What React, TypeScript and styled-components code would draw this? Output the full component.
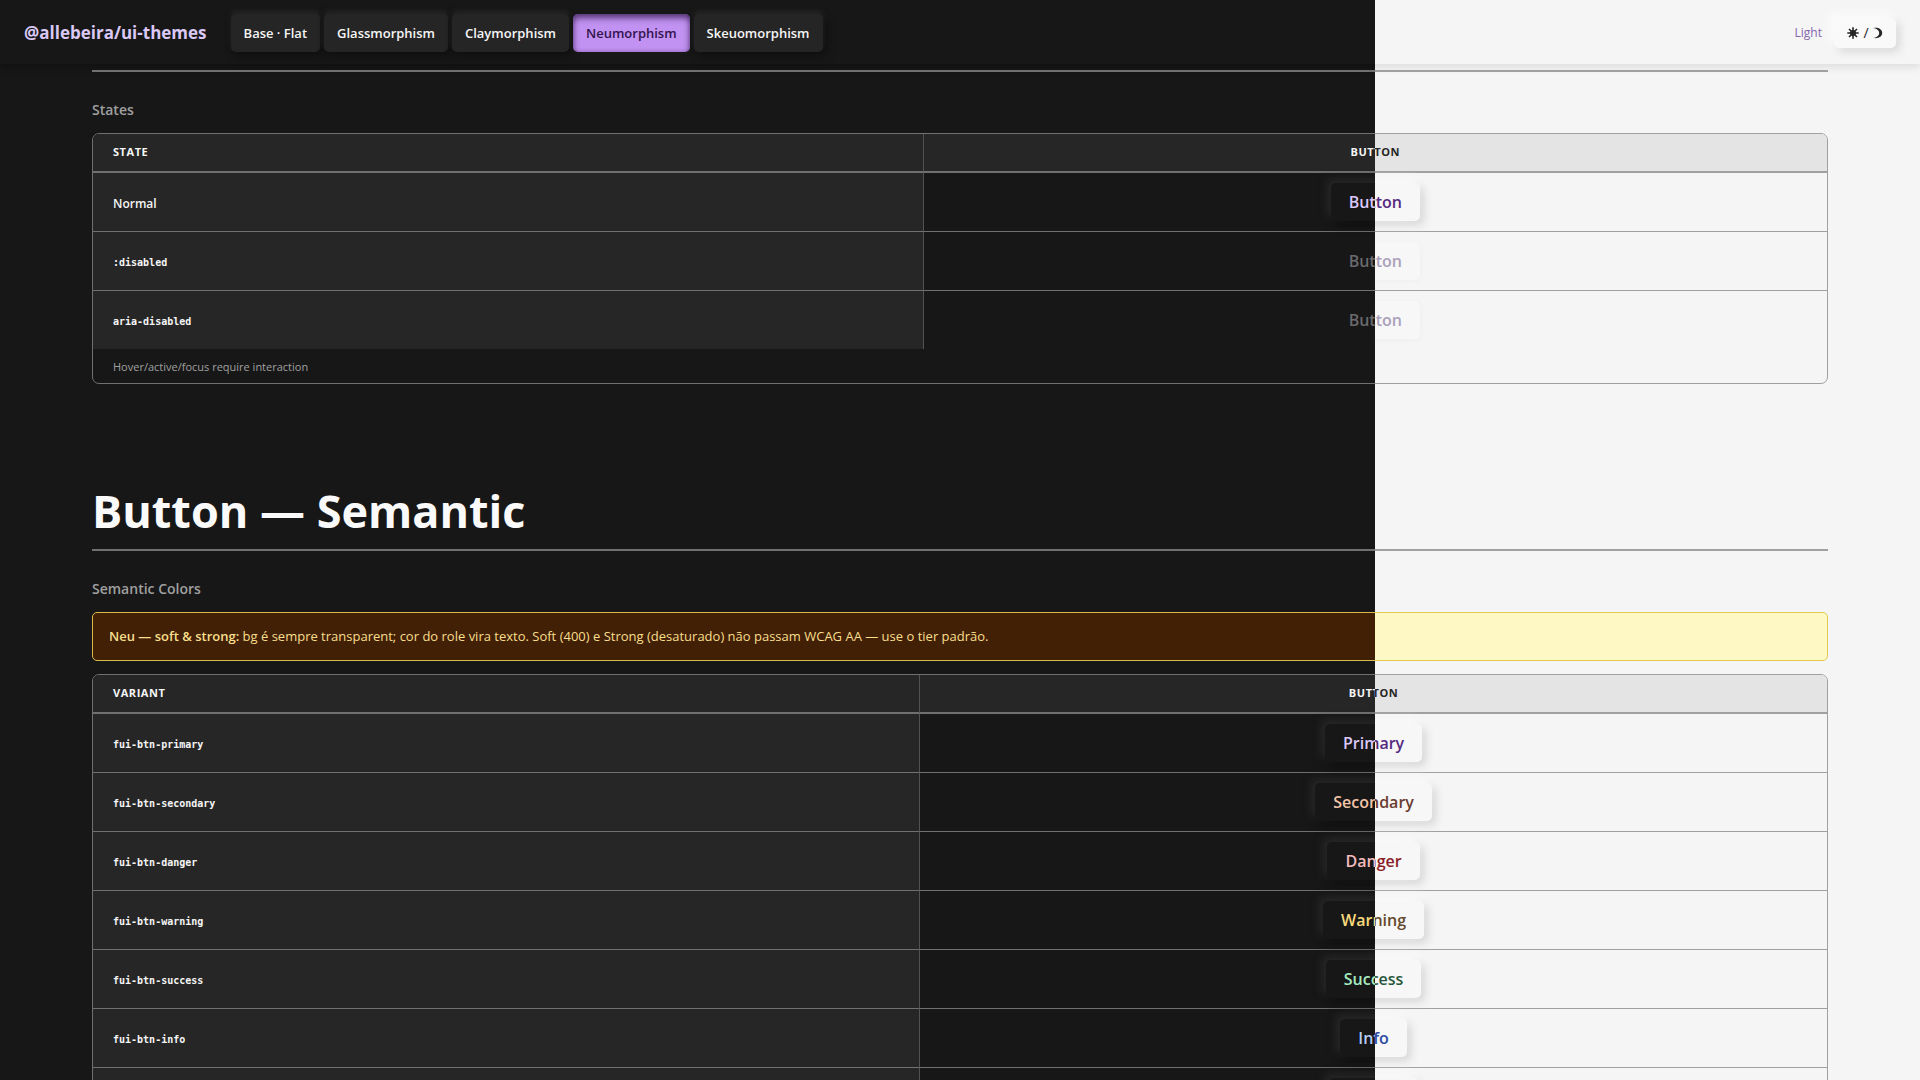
import React from "react";
import styled, { createGlobalStyle, css, ThemeProvider } from "styled-components";

type Tone =
  | "primary"
  | "secondary"
  | "danger"
  | "warning"
  | "success"
  | "info"
  | "accent";

const light = {
  name: "light",
  bg: "#f5f5f5",
  text: "#262626",
  muted: "#6b6b6b",
  brand: "#6b21a8",
  mode: "#8567ad",
  heading: "#171717",
  rule: "#a0a0a0",
  divider: "#c4c4c4",
  headCell: "#e4e4e4",
  rowCell: "#e4e4e4",
  tabBg: "#f9f9f9",
  tabShadow: "-4px -4px 8px #fcfcfc, 4px 4px 8px #d9d9d9",
  raised: "-4px -4px 8px #fafafa, 4px 4px 8px #d6d6d6",
  raisedBg: "#f7f7f7",
  faint: "1px 1px 4px #efefef",
  faintBg: "#f7f7f7",
  disabled: "#aaa0ba",
  headerShadow: "0 3px 8px rgba(0, 0, 0, 0.1)",
  noteBg: "#fef8c4",
  noteText: "#713f12",
  noteBorder: "#e6c94f",
  tones: {
    primary: "#552a80",
    secondary: "#6b3c30",
    danger: "#8a1c28",
    warning: "#66492a",
    success: "#28563a",
    info: "#2c4aa0",
    accent: "#552a80",
  } as Record<Tone, string>,
};

const dark: typeof light = {
  name: "dark",
  bg: "#171717",
  text: "#f5f5f5",
  muted: "#a0a0a0",
  brand: "#dac8f5",
  mode: "#dac8f5",
  heading: "#fafafa",
  rule: "#707070",
  divider: "#525252",
  headCell: "#262626",
  rowCell: "#262626",
  tabBg: "#252525",
  tabShadow: "0 -4px 5px #232323, 3px 4px 8px #101010",
  raised: "-4px -4px 8px #282828, 4px 4px 8px #0f0f0f",
  raisedBg: "#171717",
  faint: "none",
  faintBg: "#171717",
  disabled: "#6a696e",
  headerShadow: "0 3px 8px rgba(0, 0, 0, 0.3)",
  noteBg: "#422006",
  noteText: "#f8df8b",
  noteBorder: "#d8bb4a",
  tones: {
    primary: "#dcc8fa",
    secondary: "#f3c3a8",
    danger: "#f4bcbc",
    warning: "#f8db7c",
    success: "#a6ecc0",
    info: "#b4cdf6",
    accent: "#dcc8fa",
  },
};

type Palette = typeof light;

const GlobalStyle = createGlobalStyle`
  *, *::before, *::after { box-sizing: border-box; }
  html { scrollbar-width: none; }
  body {
    margin: 0;
    font-family: "Open Sans", "Noto Sans", sans-serif;
  }
  button { font-family: inherit; }
`;

const Stage = styled.div`
  position: relative;
`;

/* The dark snapshot is wiped over the light one from the left. */
const Wipe = styled.div`
  position: absolute;
  inset: 0;
  clip-path: inset(0 28.385% 0 0);
`;

const Screen = styled.div<{ theme: Palette }>`
  min-height: 100vh;
  background: ${({ theme }) => theme.bg};
  color: ${({ theme }) => theme.text};
`;

const Header = styled.header<{ theme: Palette }>`
  display: flex;
  align-items: center;
  height: 64px;
  padding: 2px 24px 0;
  gap: 24px;
  box-shadow: ${({ theme }) => theme.headerShadow};
`;

const Brand = styled.span<{ theme: Palette }>`
  font-size: 17px;
  font-weight: 700;
  line-height: 24px;
  color: ${({ theme }) => theme.brand};
`;

const Tabs = styled.nav`
  display: flex;
  gap: 4px;
`;

const Tab = styled.button<{ theme: Palette; $active: boolean }>`
  height: 38px;
  padding: 0 13px;
  border: 0;
  border-radius: 5px;
  font-size: 13px;
  font-weight: 600;
  line-height: 20px;
  background: ${({ theme }) => theme.tabBg};
  color: ${({ theme }) => theme.text};
  box-shadow: ${({ theme }) => theme.tabShadow};
  ${({ $active }) =>
    $active &&
    css`
      position: relative;
      background: #c192f1;
      color: #33134f;
      box-shadow: inset 0 4px 6px rgba(45, 20, 70, 0.7),
        inset 0 0 4px rgba(80, 40, 120, 0.35);
    `}
`;

const ModeGroup = styled.div`
  display: flex;
  align-items: center;
  gap: 12px;
  margin-left: auto;
`;

const ModeLabel = styled.span<{ theme: Palette }>`
  font-size: 12px;
  line-height: 18px;
  color: ${({ theme }) => theme.mode};
`;

const ModeButton = styled.button<{ theme: Palette }>`
  display: flex;
  align-items: center;
  justify-content: center;
  gap: 4px;
  width: 62px;
  height: 30px;
  padding: 0;
  border: 0;
  border-radius: 5px;
  font-size: 14px;
  font-weight: 500;
  line-height: 20px;
  background: ${({ theme }) => theme.tabBg};
  color: ${({ theme }) => theme.text};
  box-shadow: ${({ theme }) => theme.tabShadow};
`;

const Main = styled.main`
  padding: 6px 92px 0;
`;

const Rule = styled.hr<{ theme: Palette }>`
  height: 2px;
  margin: 0;
  border: 0;
  background: ${({ theme }) => theme.rule};
`;

const Title = styled.h2<{ theme: Palette }>`
  margin: 99px 0 0;
  padding-bottom: 10px;
  border-bottom: 2px solid ${({ theme }) => theme.rule};
  font-size: 45px;
  font-weight: 700;
  line-height: 56px;
  color: ${({ theme }) => theme.heading};
`;

const Subtitle = styled.h3<{ theme: Palette }>`
  margin: 28px 0 13px;
  font-size: 14px;
  font-weight: 600;
  line-height: 20px;
  color: ${({ theme }) => theme.muted};
`;

const Note = styled.p<{ theme: Palette }>`
  margin: 0 0 13px;
  padding: 14px 16px;
  border: 1px solid ${({ theme }) => theme.noteBorder};
  border-radius: 5px;
  font-size: 13px;
  line-height: 19px;
  background: ${({ theme }) => theme.noteBg};
  color: ${({ theme }) => theme.noteText};

  strong {
    font-weight: 600;
  }
`;

const TableFrame = styled.div<{ theme: Palette }>`
  border: 1px solid ${({ theme }) => theme.rule};
  border-radius: 7px;
  overflow: hidden;
`;

const Table = styled.table`
  width: 100%;
  table-layout: fixed;
  border-collapse: separate;
  border-spacing: 0;
`;

const HeadCell = styled.th<{ theme: Palette; $lead?: boolean; $share?: string }>`
  height: 39px;
  width: ${({ $share }) => $share ?? "auto"};
  padding: 0 20px 2px;
  border-bottom: 2px solid ${({ theme }) => theme.rule};
  font-size: 11px;
  font-weight: 700;
  line-height: 16px;
  letter-spacing: 0.05em;
  text-transform: uppercase;
  text-align: center;
  background: ${({ theme }) => theme.headCell};
  ${({ $lead, theme }) =>
    $lead &&
    css`
      text-align: left;
      border-right: 1px solid ${theme.divider};
    `}
`;

const Row = styled.tr<{ theme: Palette }>`
  > * {
    border-bottom: 1px solid ${({ theme }) => theme.rule};
  }
  &:last-child > * {
    border-bottom: 0;
  }
`;

const RowHead = styled.th<{ theme: Palette }>`
  padding: 3px 20px 0;
  border-right: 1px solid ${({ theme }) => theme.divider};
  font-size: 12px;
  font-weight: 600;
  line-height: 18px;
  text-align: left;
  background: ${({ theme }) => theme.rowCell};
`;

const Code = styled.code`
  font-family: "DejaVu Sans Mono", "Liberation Mono", monospace;
  font-size: 10px;
  font-weight: 700;
`;

const DemoCell = styled.td`
  padding: 10px 20px;
  text-align: center;
`;

const FootCell = styled.td<{ theme: Palette }>`
  padding: 9px 20px 7px;
  font-size: 11px;
  line-height: 18px;
  color: ${({ theme }) => theme.muted};
`;

const DemoButton = styled.button<{ theme: Palette; $tone: Tone }>`
  display: block;
  height: 38px;
  margin: 0 auto;
  padding: 0 18px;
  border: 0;
  border-radius: 5px;
  font-size: 16px;
  font-weight: 600;
  line-height: 22px;
  background: ${({ theme }) => theme.raisedBg};
  color: ${({ theme, $tone }) => theme.tones[$tone]};
  box-shadow: ${({ theme }) => theme.raised};

  &:disabled,
  &[aria-disabled="true"] {
    background: ${({ theme }) => theme.faintBg};
    color: ${({ theme }) => theme.disabled};
    box-shadow: ${({ theme }) => theme.faint};
  }
`;

const SunIcon = () => (
  <svg width="12" height="12" viewBox="0 0 12 12" aria-hidden="true">
    <circle cx="6" cy="6" r="3" fill="currentColor" />
    <path
      d="M6 0.3v11.4M0.3 6h11.4M2 2l8 8M10 2l-8 8"
      stroke="currentColor"
      strokeWidth="1.6"
    />
  </svg>
);

const MoonIcon = () => (
  <svg width="10" height="12" viewBox="0 0 10 12" aria-hidden="true">
    <path
      d="M0.600 1C5.400 0.200 9.200 2.400 9.200 6C9.200 9.600 5.400 11.800 0.600 11C4.400 10 6.200 8.400 6.200 6C6.200 3.600 4.400 2 0.600 1Z"
      fill="currentColor"
    />
  </svg>
);

const TABS = ["Base · Flat", "Glassmorphism", "Claymorphism", "Neumorphism", "Skeuomorphism"];

const VARIANTS: { tone: Tone; label: string }[] = [
  { tone: "primary", label: "Primary" },
  { tone: "secondary", label: "Secondary" },
  { tone: "danger", label: "Danger" },
  { tone: "warning", label: "Warning" },
  { tone: "success", label: "Success" },
  { tone: "info", label: "Info" },
  { tone: "accent", label: "Accent" },
];

function Showcase({ palette }: { palette: Palette }) {
  return (
    <ThemeProvider theme={palette}>
      <Screen>
        <Header>
          <Brand>@allebeira/ui-themes</Brand>
          <Tabs>
            {TABS.map((tab) => (
              <Tab key={tab} type="button" $active={tab === "Neumorphism"}>
                {tab}
              </Tab>
            ))}
          </Tabs>
          <ModeGroup>
            <ModeLabel>{palette.name === "light" ? "Light" : "Dark"}</ModeLabel>
            <ModeButton type="button" aria-label="Toggle colour mode">
              <SunIcon />
              <span>/</span>
              <MoonIcon />
            </ModeButton>
          </ModeGroup>
        </Header>
        <Main>
          <Rule />
          <Subtitle>States</Subtitle>
          <TableFrame>
            <Table>
              <thead>
                <tr>
                  <HeadCell scope="col" $lead $share="47.9%">State</HeadCell>
                  <HeadCell scope="col">Button</HeadCell>
                </tr>
              </thead>
              <tbody>
                <Row>
                  <RowHead scope="row">Normal</RowHead>
                  <DemoCell>
                    <DemoButton type="button" $tone="primary">Button</DemoButton>
                  </DemoCell>
                </Row>
                <Row>
                  <RowHead scope="row"><Code>:disabled</Code></RowHead>
                  <DemoCell>
                    <DemoButton type="button" $tone="primary" disabled>Button</DemoButton>
                  </DemoCell>
                </Row>
                <Row>
                  <RowHead scope="row"><Code>aria-disabled</Code></RowHead>
                  <DemoCell>
                    <DemoButton type="button" $tone="primary" aria-disabled="true">Button</DemoButton>
                  </DemoCell>
                </Row>
              </tbody>
              <tfoot>
                <tr>
                  <FootCell colSpan={2}>Hover/active/focus require interaction</FootCell>
                </tr>
              </tfoot>
            </Table>
          </TableFrame>

          <Title>Button — Semantic</Title>
          <Subtitle>Semantic Colors</Subtitle>
          <Note>
            <strong>Neu — soft &amp; strong:</strong> bg é sempre transparent; cor do role vira
            texto. Soft (400) e Strong (desaturado) não passam WCAG AA — use o tier padrão.
          </Note>
          <TableFrame>
            <Table>
              <thead>
                <tr>
                  <HeadCell scope="col" $lead $share="47.7%">Variant</HeadCell>
                  <HeadCell scope="col">Button</HeadCell>
                </tr>
              </thead>
              <tbody>
                {VARIANTS.map(({ tone, label }) => (
                  <Row key={tone}>
                    <RowHead scope="row"><Code>{`fui-btn-${tone}`}</Code></RowHead>
                    <DemoCell>
                      <DemoButton type="button" $tone={tone}>{label}</DemoButton>
                    </DemoCell>
                  </Row>
                ))}
              </tbody>
            </Table>
          </TableFrame>
        </Main>
      </Screen>
    </ThemeProvider>
  );
}

export default function App() {
  return (
    <>
      <GlobalStyle />
      <Stage>
        <Showcase palette={light} />
        <Wipe aria-hidden="true">
          <Showcase palette={dark} />
        </Wipe>
      </Stage>
    </>
  );
}
